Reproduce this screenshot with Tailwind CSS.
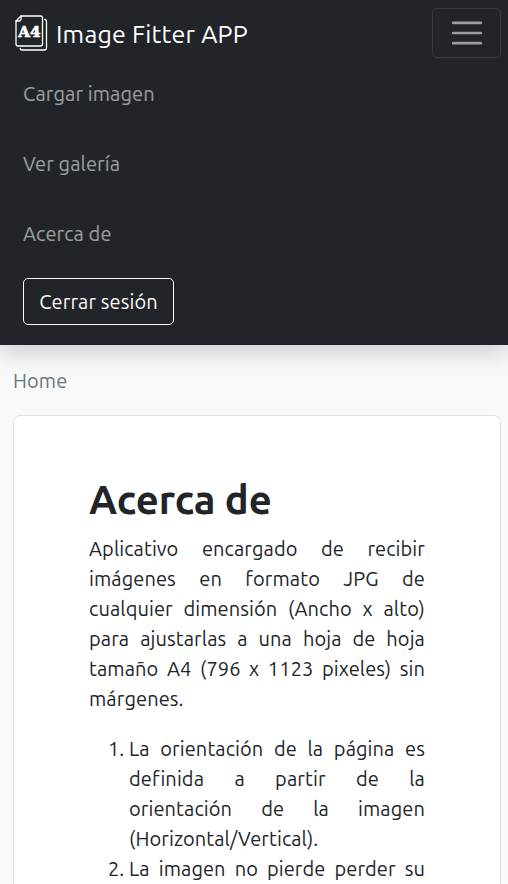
<!DOCTYPE html>
<html lang="es">
<head>
<meta charset="utf-8">
<title>Image Fitter APP</title>
<script src="https://cdn.jsdelivr.net/npm/@tailwindcss/browser@4"></script>
</head>
<body class="h-[884px] overflow-hidden bg-[#f8f9fa] font-['Ubuntu','Noto_Sans',sans-serif] text-[20px] leading-[30px] tracking-[0.1px] text-[#212529]">
<header class="relative h-[345px] bg-[#212529] pt-2 shadow-[0_10px_20px_rgba(0,0,0,0.15)]">
  <div class="flex h-[50px] items-center justify-between pl-[13px] pr-[7px]">
    <a class="flex items-center text-white">
      <svg class="h-[38px] w-[38px]" viewBox="0 0 38 38" fill="none" stroke="#fff" stroke-width="1.3" stroke-linejoin="round" stroke-linecap="round">
        <path d="M8 2h19.500q2 0 2 2v26q0 2-2 2h-22.500q-2 0-2-2v-23z"/>
        <path d="M8 2v3.200q0 1.800-1.800 1.800H3"/>
        <path d="M31.500 5.500q2 0 2 2v26q0 2.500-2 2.500h-22.500q-1.500 0-1.800-1.500"/>
        <text x="5.300" y="22.700" textLength="22.300" lengthAdjust="spacingAndGlyphs" letter-spacing="0" fill="#fff" stroke="#fff" stroke-width=".7" font-family="DejaVu Serif, serif" font-weight="700" font-size="15.500">A4</text>
      </svg>
      <span class="ml-[5px] mt-px text-[25px] tracking-[0.2px]">Image Fitter APP</span>
    </a>
    <button class="flex h-[50px] w-[69px] items-center justify-center rounded-[5px] border border-white/10" aria-label="Menú">
      <svg class="h-[38px] w-[38px]" viewBox="0 0 30 30" fill="none" stroke="#fff" stroke-opacity=".55" stroke-width="2" stroke-linecap="round"><path d="M4 7h22M4 15h22M4 23h22"/></svg>
    </button>
  </div>
  <nav class="flex flex-col items-start pl-[23px] pt-[21px] text-white/55">
    <a class="mb-10">Cargar imagen</a>
    <a class="mb-10">Ver galería</a>
    <a>Acerca de</a>
    <button class="mt-[29px] h-[47px] w-[151px] whitespace-nowrap rounded-[5px] border border-[#f8f9fa] tracking-[0.1px] text-[#f8f9fa]">Cerrar sesión</button>
  </nav>
</header>
<main class="h-[539px] overflow-hidden pl-[13px] pr-[7px] pt-[21px]">
  <div class="mb-[19px] text-[#6c757d]">Home</div>
  <section class="h-[469px] rounded-t-[7px] border border-b-0 border-[#dee2e6] bg-white px-[75px] pt-[60px] text-justify">
    <h1 class="mb-[10px] text-[40px] font-bold leading-[48px] tracking-normal">Acerca de</h1>
    <p class="mb-5">Aplicativo encargado de recibir imágenes en formato JPG de cualquier dimensión (Ancho x alto) para ajustarlas a una hoja de hoja tamaño A4 (796 x 1123 pixeles) sin márgenes.</p>
    <ol class="list-decimal pl-10">
      <li>La orientación de la página es definida a partir de la orientación de la imagen (Horizontal/Vertical).</li>
      <li class="[text-align-last:justify]">La imagen no pierde perder su</li>
    </ol>
  </section>
</main>
</body>
</html>
